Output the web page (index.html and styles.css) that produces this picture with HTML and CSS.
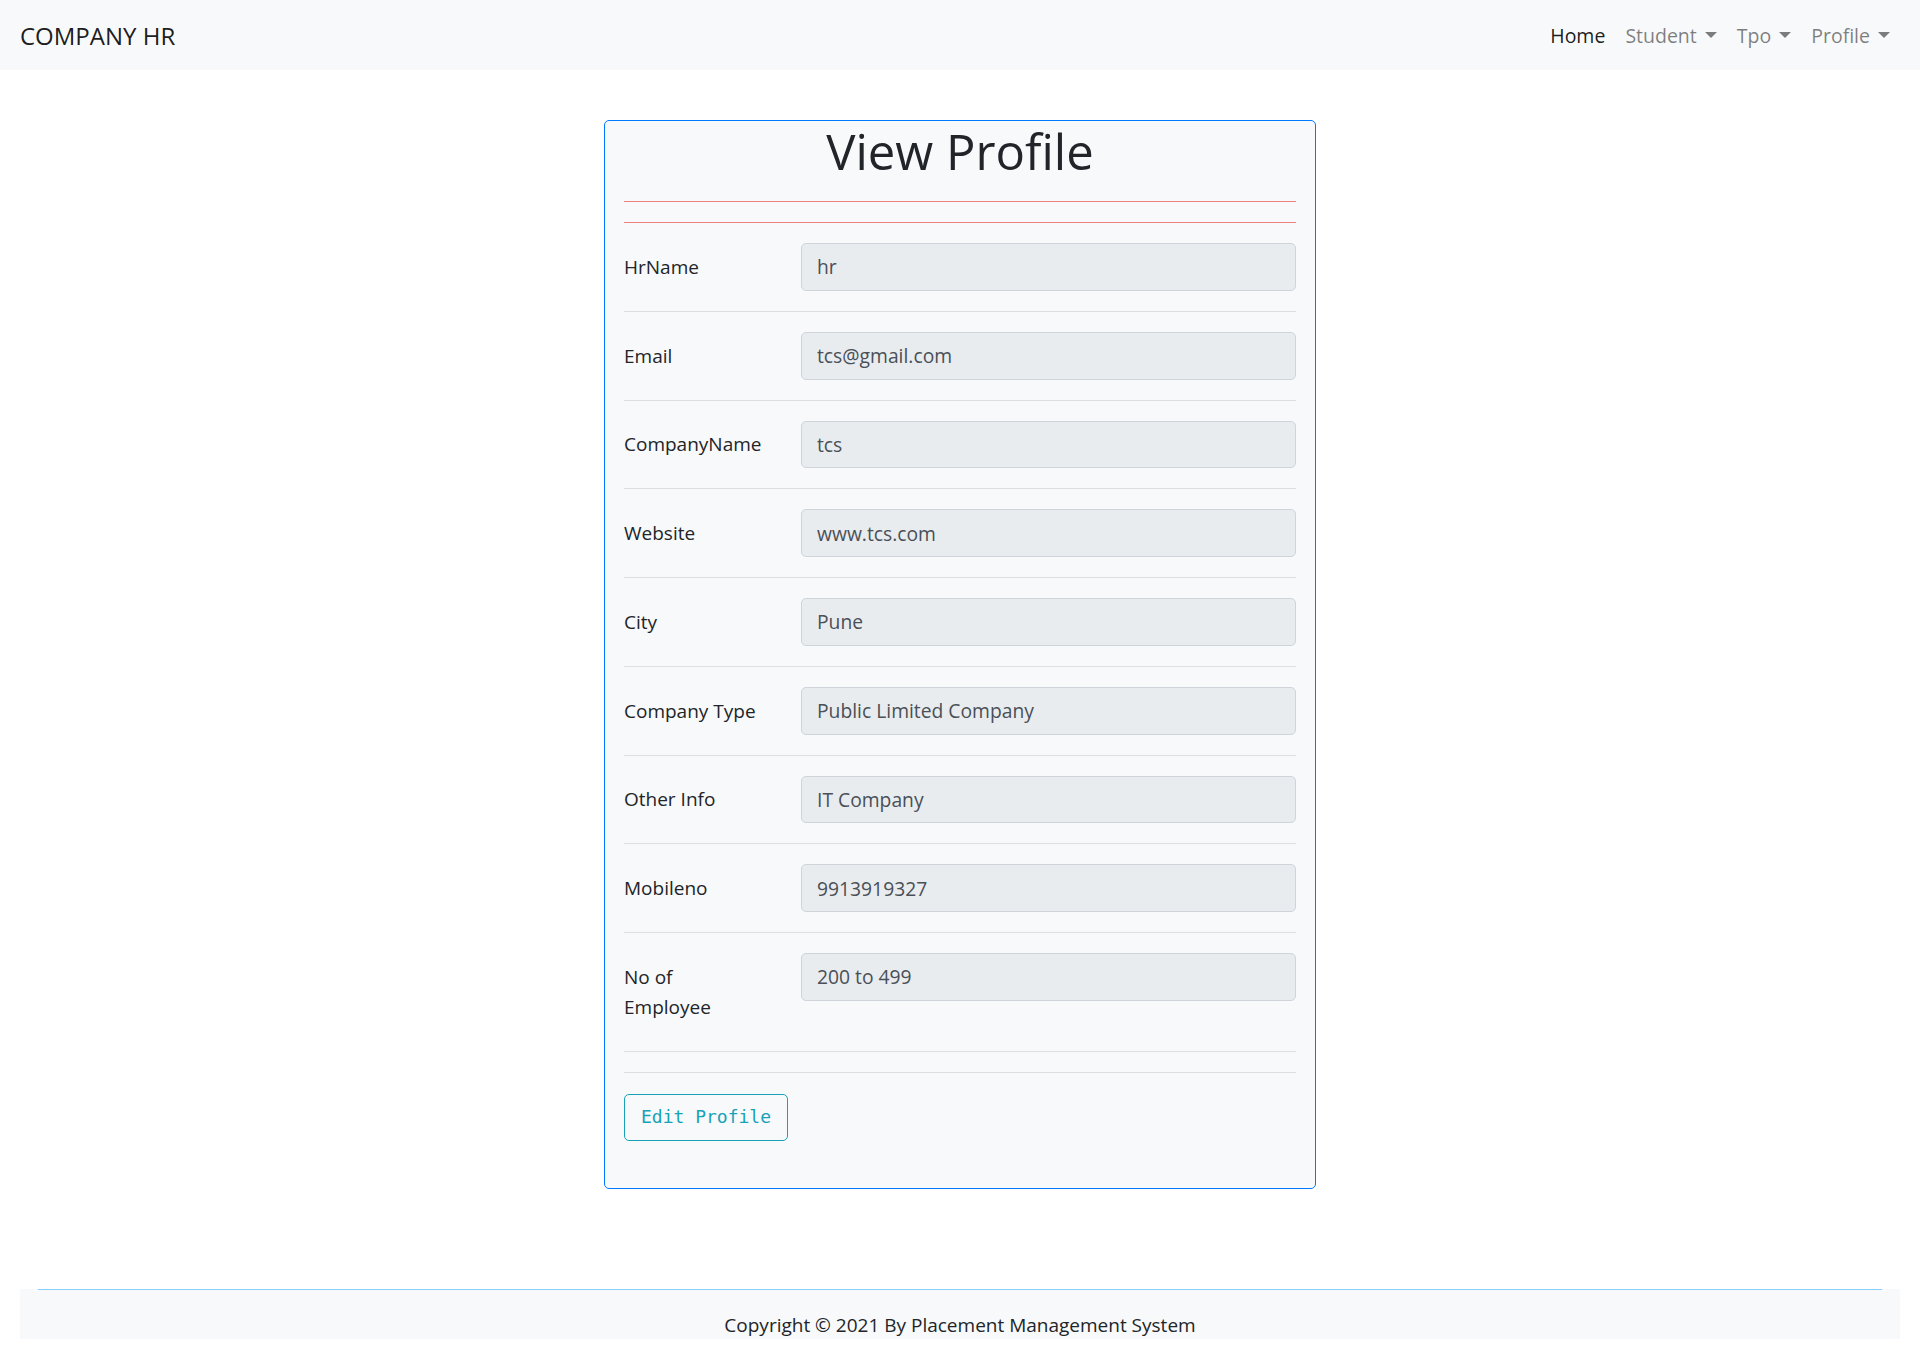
FILE: index.html
```html
<!DOCTYPE html>
<html lang="en">
<head>
<meta charset="utf-8">
<title>View Profile</title>
<link rel="stylesheet" href="styles.css">
</head>
<body>
<nav class="navbar">
  <a class="brand" href="#">COMPANY HR</a>
  <ul class="nav">
    <li><a class="nav-link active" href="#">Home</a></li>
    <li><a class="nav-link dropdown" href="#">Student</a></li>
    <li><a class="nav-link dropdown" href="#">Tpo</a></li>
    <li><a class="nav-link dropdown" href="#">Profile</a></li>
  </ul>
</nav>

<main class="main">
  <div class="card">
    <h1 class="title">View Profile</h1>
    <hr class="hr-red">
    <hr class="hr-red">
    <form class="form">
      <div class="row"><label class="label">HrName</label><div class="field"><input class="control" value="hr" readonly></div></div>
      <hr class="hr-gray">
      <div class="row"><label class="label">Email</label><div class="field"><input class="control" value="tcs@gmail.com" readonly></div></div>
      <hr class="hr-gray">
      <div class="row"><label class="label">CompanyName</label><div class="field"><input class="control" value="tcs" readonly></div></div>
      <hr class="hr-gray">
      <div class="row"><label class="label">Website</label><div class="field"><input class="control" value="www.tcs.com" readonly></div></div>
      <hr class="hr-gray">
      <div class="row"><label class="label">City</label><div class="field"><input class="control" value="Pune" readonly></div></div>
      <hr class="hr-gray">
      <div class="row"><label class="label">Company Type</label><div class="field"><input class="control" value="Public Limited Company" readonly></div></div>
      <hr class="hr-gray">
      <div class="row"><label class="label">Other Info</label><div class="field"><input class="control" value="IT Company" readonly></div></div>
      <hr class="hr-gray">
      <div class="row"><label class="label">Mobileno</label><div class="field"><input class="control" value="9913919327" readonly></div></div>
      <hr class="hr-gray">
      <div class="row"><label class="label">No of<br>Employee</label><div class="field"><input class="control" value="200 to 499" readonly></div></div>
      <hr class="hr-gray">
      <hr class="hr-gray">
      <button type="button" class="btn">Edit Profile</button>
    </form>
  </div>
</main>

<footer class="footer">
  <hr class="hr-blue">
  <p class="copy">Copyright © 2021 By Placement Management System</p>
</footer>
</body>
</html>
```

FILE: styles.css
```css
* { box-sizing: border-box; }

html, body {
  margin: 0;
  padding: 0;
  background: #ffffff;
  font-family: "Open Sans", "Noto Sans", "Liberation Sans", sans-serif;
  font-size: 20px;
  line-height: 1.5;
  color: #212529;
}

a { text-decoration: none; }

.navbar {
  height: 70px;
  background: #f8f9fa;
  padding: 2px 20px 0;
  display: flex;
  align-items: center;
  justify-content: space-between;
}

.brand {
  font-size: 24px;
  line-height: 1.5;
  color: rgba(0, 0, 0, 0.9);
}

.nav {
  list-style: none;
  margin: 0;
  padding: 0;
  display: flex;
}

.nav-link {
  display: block;
  padding: 0 10px;
  font-size: 19.5px;
  color: rgba(0, 0, 0, 0.5);
}

.nav-link.active { color: rgba(0, 0, 0, 0.9); }

.dropdown::after {
  content: "";
  display: inline-block;
  margin-left: 8px;
  vertical-align: 5px;
  border-top: 6px solid;
  border-left: 6px solid transparent;
  border-right: 6px solid transparent;
}

.main {
  padding-top: 50px;
  display: flex;
  justify-content: center;
}

.card {
  width: 712px;
  background: #f8f9fa;
  border: 1px solid #007bff;
  border-radius: 5px;
  padding: 0 19px 47px;
}

.title {
  margin: 0 0 20px;
  font-size: 49px;
  line-height: 60px;
  font-weight: 500;
  text-align: center;
  color: #212529;
}

hr {
  margin: 20px 0;
  border: 0;
  height: 0;
}

.hr-red { border-top: 1px solid #f08080; }
.hr-gray { border-top: 1px solid rgba(0, 0, 0, 0.1); }

.form { margin: 0; }

.row {
  display: flex;
  margin: 20px 0;
}

.label {
  width: 158px;
  flex: 0 0 158px;
  padding: 8.75px 0;
  font-size: 19px;
  line-height: 30px;
  color: #212529;
}

.field {
  flex: 1;
  margin-left: 19px;
}

.control {
  display: block;
  width: 100%;
  height: 47.75px;
  padding: 7.5px 15px;
  font-family: inherit;
  font-size: 19.3px;
  line-height: 30px;
  color: #495057;
  background: #e9ecef;
  border: 1px solid #ced4da;
  border-radius: 5px;
  outline: none;
}

.btn {
  display: inline-block;
  margin-top: 1px;
  height: 47.75px;
  padding: 7.5px 16px;
  font-family: "DejaVu Sans Mono", "Liberation Mono", monospace;
  font-size: 18px;
  line-height: 30px;
  color: #17a2b8;
  background: transparent;
  border: 1px solid #17a2b8;
  border-radius: 5px;
}

.footer {
  margin: 100px 20px 0;
  background: #f8f9fa;
  height: 50px;
  overflow: hidden;
}

.hr-blue {
  margin: 0 18px;
  border-top: 1px solid #87cefa;
}

.copy {
  margin: 20px 0 0;
  text-align: center;
  font-size: 19px;
  line-height: 30px;
  color: #212529;
}
```
